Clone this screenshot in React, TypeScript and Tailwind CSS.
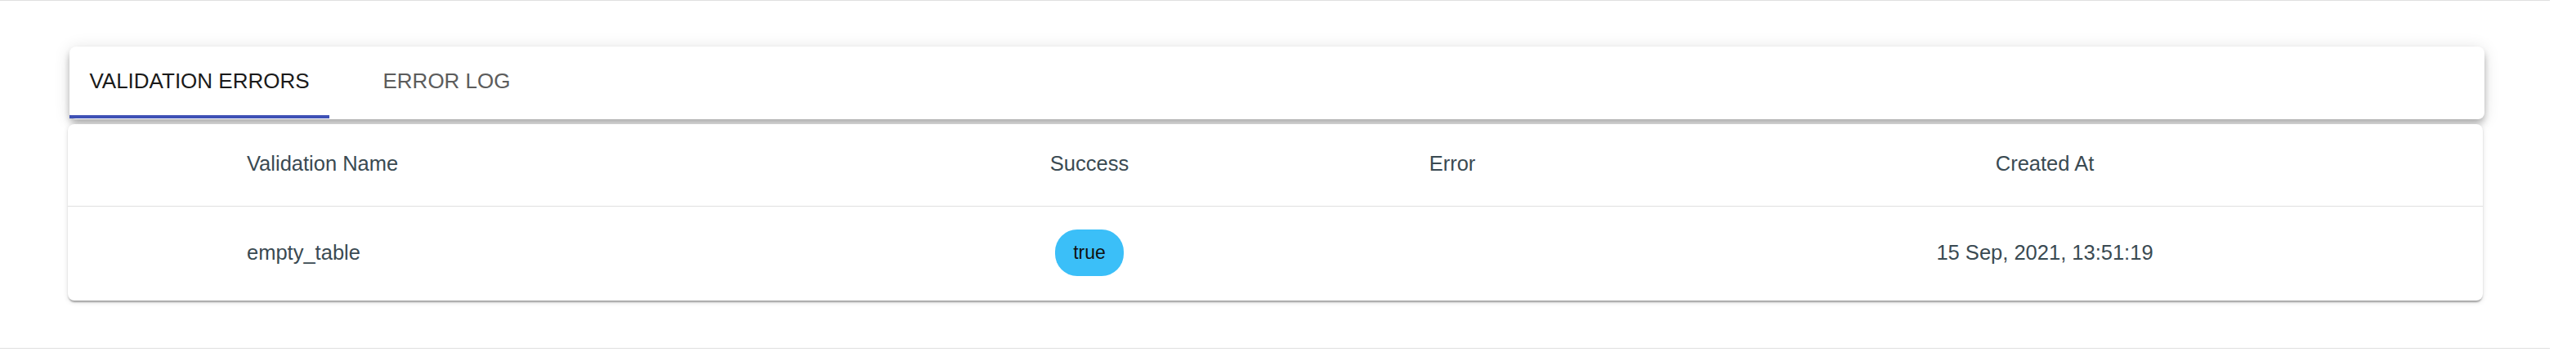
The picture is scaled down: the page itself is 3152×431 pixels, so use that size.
import React from "react";

const font = { fontFamily: '"Liberation Sans", Arial, Helvetica, sans-serif' };

export default function App() {
  return (
    <div
      style={font}
      className="w-[3120px] bg-white border-y border-[#e0e0e0] pt-[56px] pb-[58px] pl-[83px] pr-[82px]"
    >
      {/* Tabs card */}
      <div className="ml-[2px] mr-[-2px] bg-white rounded-[8px] pb-[1px] shadow-[0_4px_8px_-2px_rgba(0,0,0,0.2),0_8px_10px_0_rgba(0,0,0,0.14),0_2px_20px_0_rgba(0,0,0,0.12)]">
        <div className="flex">
          <div className="relative h-[88px] w-[318px] flex items-center justify-center pb-[3px] text-[26px] text-[#1a1a1a] uppercase">
            VALIDATION ERRORS
            <div className="absolute left-0 right-0 bottom-0 h-[4px] bg-[#3f51b5]" />
          </div>
          <div className="relative h-[88px] w-[287px] flex items-center justify-center pb-[3px] text-[26px] text-[#5c5c5c] uppercase">
            ERROR LOG
          </div>
        </div>
      </div>

      {/* Table card */}
      <div className="mt-[6px] bg-white rounded-[8px] shadow-[0_4px_2px_-2px_rgba(0,0,0,0.2),0_2px_2px_0_rgba(0,0,0,0.14),0_2px_6px_0_rgba(0,0,0,0.12)] text-[25.5px] text-[#3a4a52]">
        <div className="grid grid-cols-[219px_881px_300px_588px_862px_1fr] h-[101px] items-center border-b border-[#e0e0e0] pb-[4px]">
          <div />
          <div>Validation Name</div>
          <div className="text-center">Success</div>
          <div className="text-center">Error</div>
          <div className="text-center">Created At</div>
          <div />
        </div>
        <div className="grid grid-cols-[219px_881px_300px_588px_862px_1fr] h-[115px] items-center pb-[3px]">
          <div />
          <div>empty_table</div>
          <div className="flex justify-center">
            <span className="h-[57px] px-[22px] rounded-[27px] bg-[#3bbff8] text-[#111111] text-[23px] flex items-center justify-center">
              true
            </span>
          </div>
          <div />
          <div className="text-center">15 Sep, 2021, 13:51:19</div>
          <div />
        </div>
      </div>
    </div>
  );
}
